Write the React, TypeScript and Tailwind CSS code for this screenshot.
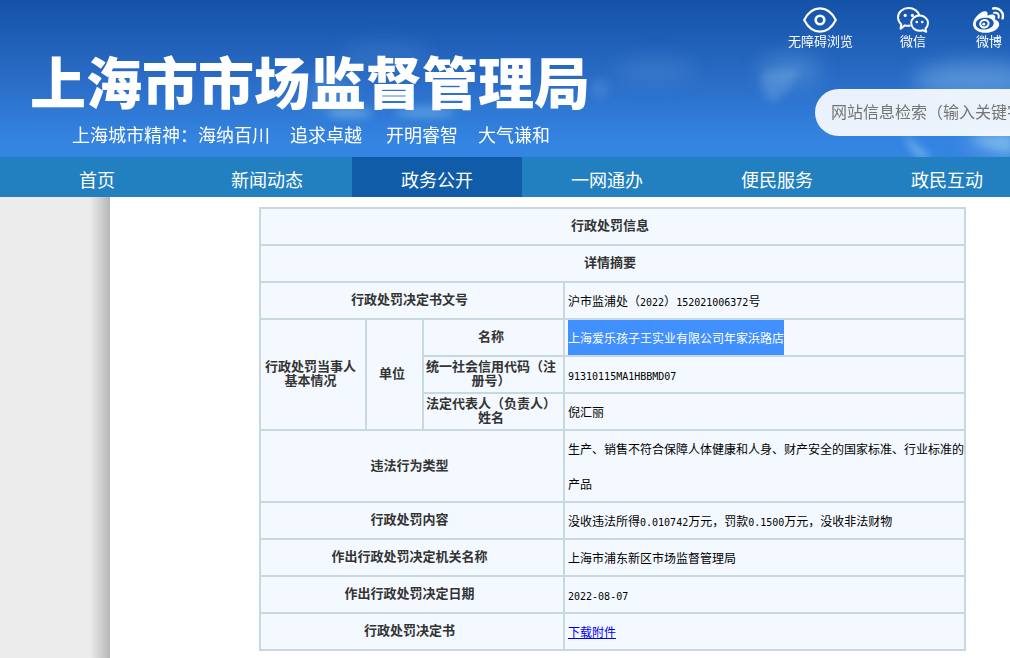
import type { ReactNode } from 'react';

interface NavItem {
  label: string;
  active?: boolean;
}

const NAV_ITEMS: NavItem[] = [
  { label: '首页' },
  { label: '新闻动态' },
  { label: '政务公开', active: true },
  { label: '一网通办' },
  { label: '便民服务' },
  { label: '政民互动' },
];

function EyeIcon() {
  return (
    <svg className="h-[26px] w-[34px]" viewBox="0 0 34 26" fill="none" stroke="currentColor" aria-hidden="true">
      <path d="M1.2 13C5 5.5 10.5 1.4 17 1.4S29 5.5 32.8 13C29 20.5 23.5 24.6 17 24.6S5 20.5 1.2 13Z" strokeWidth="2.2" />
      <circle cx="17" cy="13" r="4.3" strokeWidth="2.6" />
    </svg>
  );
}

function WechatIcon() {
  return (
    <svg className="h-[26px] w-[32px]" viewBox="0 0 32 26" fill="none" stroke="currentColor" aria-hidden="true">
      <path
        d="M13.6 18.6C11.4 19 9.4 18.9 7.8 18.4L3.6 21.8L4.2 17.2C2.1 15.4 1 13 1 10.3C1 5 5.8 1 11.6 1C17 1 21.2 4.2 22.2 8.3"
        strokeWidth="2"
        strokeLinejoin="round"
      />
      <path
        d="M22.6 8.6C27.3 8.6 31 11.9 31 16.1C31 18.4 30 20.3 28.4 21.6L29.2 24.8L25.6 23.2C24.7 23.5 23.7 23.8 22.6 23.8C17.9 23.8 14.2 20.4 14.2 16.1S17.9 8.6 22.6 8.6Z"
        strokeWidth="2"
        strokeLinejoin="round"
      />
      <g fill="currentColor" stroke="none">
        <circle cx="8.2" cy="8.4" r="1.6" />
        <circle cx="15.4" cy="8.4" r="1.6" />
        <circle cx="19.8" cy="15" r="1.3" />
        <circle cx="25.2" cy="15" r="1.3" />
      </g>
    </svg>
  );
}

function WeiboIcon() {
  return (
    <svg className="h-[26px] w-[32px]" viewBox="0 0 32 26" fill="none" stroke="currentColor" aria-hidden="true">
      <path
        fill="currentColor"
        fillRule="evenodd"
        stroke="none"
        d="M0 17.2C0 11.6 7 4.2 12 4.2C14.4 4.2 15.2 6.2 14.4 8.8C17.4 7.4 21 7 22 9C22.5 10 22.3 11.2 21.9 12.4C24.4 13.1 26.2 14.8 26.2 17.2C26.2 21.6 20.2 25.8 12.6 25.8C5.6 25.8 0 22.4 0 17.2ZM2.8 17.2C3.1 20.8 7.2 22.9 12.2 22.4C17.2 21.9 21 19.1 20.7 15.7C20.4 12.4 16.2 10.3 11.3 10.8C6.4 11.3 2.6 13.8 2.8 17.2Z"
      />
      <ellipse cx="11.4" cy="16.7" rx="4.2" ry="3.7" strokeWidth="2" transform="rotate(-15 11.4 16.7)" />
      <circle cx="10.8" cy="17.2" r="1.4" fill="currentColor" stroke="none" />
      <path d="M20.2 1.5C26.2 .2 31.2 5 29.6 11.4" strokeWidth="2.4" strokeLinecap="round" />
      <path d="M21 5.8C24.3 5.2 26.6 7.4 25.6 10.6" strokeWidth="2" strokeLinecap="round" />
    </svg>
  );
}

function Clouds() {
  return (
    <svg
      className="absolute inset-0 h-full w-full"
      viewBox="0 0 1010 157"
      preserveAspectRatio="xMaxYMid slice"
      aria-hidden="true"
    >
      <defs>
        <filter id="soft" x="-60%" y="-100%" width="220%" height="300%">
          <feGaussianBlur stdDeviation="10" />
        </filter>
        <filter id="wisp" x="-60%" y="-60%" width="220%" height="220%">
          <feGaussianBlur stdDeviation="4" />
        </filter>
      </defs>
      <g fill="#8fc4ee" filter="url(#soft)">
        <ellipse cx="385" cy="55" rx="45" ry="14" opacity="0.12" />
        <ellipse cx="330" cy="92" rx="18" ry="16" opacity="0.3" />
        <ellipse cx="655" cy="70" rx="40" ry="12" opacity="0.16" />
        <ellipse cx="790" cy="70" rx="32" ry="16" opacity="0.26" />
        <ellipse cx="975" cy="80" rx="62" ry="18" opacity="0.42" />
        <ellipse cx="1000" cy="142" rx="34" ry="14" opacity="0.4" />
      </g>
      <g fill="#9fd0f2" filter="url(#wisp)">
        <ellipse cx="350" cy="113" rx="22" ry="5" opacity="0.45" />
        <ellipse cx="425" cy="112" rx="30" ry="6" opacity="0.35" />
        <ellipse cx="600" cy="88" rx="9" ry="10" opacity="0.16" />
        <path d="M762 72L800 68Q782 104 770 102Q760 96 762 72Z" opacity="0.22" />
        <path d="M905 132Q916 150 932 157L922 159Q908 150 905 132Z" opacity="0.7" />
        <path d="M970 138Q990 150 1012 154L1012 134Z" opacity="0.45" />
      </g>
    </svg>
  );
}

function QuickLink({ icon, label }: { icon: ReactNode; label: string }) {
  return (
    <a href="#" className="flex flex-col items-center whitespace-nowrap text-[13px] leading-4 text-white">
      {icon}
      <span>{label}</span>
    </a>
  );
}

// half-width runs are set in a monospace face so they take half a glyph each
function Mixed({ text }: { text: string }) {
  return (
    <>
      {text.split(/([0-9A-Z.-]+)/).map((part, i) =>
        i % 2 === 1 ? (
          <span key={i} className="font-['DejaVu_Sans_Mono',monospace] text-[10px] leading-none">
            {part}
          </span>
        ) : (
          part
        )
      )}
    </>
  );
}

function Label({ children, colSpan, rowSpan }: { children: ReactNode; colSpan?: number; rowSpan?: number }) {
  return (
    <th
      colSpan={colSpan}
      rowSpan={rowSpan}
      className="h-[37px] border-2 border-[#c8d8e0] pr-1.5 pb-[3px] pl-px text-center align-middle text-[13px] leading-[14px] font-bold text-[#333]"
    >
      {children}
    </th>
  );
}

function Value({ children }: { children: ReactNode }) {
  return (
    <td className="border-2 border-[#c8d8e0] pl-[3px] text-left align-middle text-xs leading-[35px] text-black">
      {children}
    </td>
  );
}

export default function App() {
  return (
    <div className="flex min-h-screen flex-col overflow-x-hidden bg-white font-['Noto_Sans_CJK_SC',sans-serif]">
      <header className="relative overflow-hidden bg-linear-to-b from-[#1452a8] via-[#2a6cc6] to-[#3484e2] to-90%">
        <Clouds />
        <div className="relative flex h-[157px] justify-between">
          <div className="flex shrink-0 flex-col pt-[46px] pl-[30px] text-white">
            <h1 className="text-[56px] leading-[68px] font-black whitespace-nowrap">上海市市场监督管理局</h1>
            <p className="flex pt-2 pl-[42px] text-lg leading-6 whitespace-nowrap">
              <span>上海城市精神：海纳百川</span>
              <span className="ml-5">追求卓越</span>
              <span className="ml-6">开明睿智</span>
              <span className="ml-5">大气谦和</span>
            </p>
          </div>
          <div className="flex shrink-0 flex-col items-end gap-10 pt-[7px]">
            <div className="flex gap-11 pr-[5px]">
              <QuickLink icon={<EyeIcon />} label="无障碍浏览" />
              <QuickLink icon={<WechatIcon />} label="微信" />
              <QuickLink icon={<WeiboIcon />} label="微博" />
            </div>
            <input
              type="text"
              aria-label="网站信息检索"
              placeholder="网站信息检索（输入关键字）"
              className="h-[47px] w-[195px] rounded-l-[24px] bg-white/90 pb-1 pl-4 text-base text-black outline-none placeholder:text-[#757575]"
            />
          </div>
        </div>
      </header>

      <nav className="flex h-10 shrink-0 overflow-hidden bg-[#2280c0] pl-3">
        {NAV_ITEMS.map((item) => (
          <a
            key={item.label}
            href="#"
            className={`w-[170px] shrink-0 text-center text-lg leading-[44px] text-white ${
              item.active ? 'bg-[#115ca8]' : ''
            }`}
          >
            {item.label}
          </a>
        ))}
      </nav>

      <div className="flex flex-1">
        <aside className="flex w-[110px] shrink-0 justify-end bg-[#ececec]">
          <div className="w-5 bg-linear-to-r from-[#ececec] to-[#b6b6b6]" />
        </aside>
        <main className="flex-1 pt-2.5 pr-11 pb-1.5 pl-[149px]">
          <table className="w-full table-fixed border-collapse bg-[#f4f9ff]">
            <colgroup>
              <col className="w-[106px]" />
              <col className="w-[57px]" />
              <col className="w-[141px]" />
              <col />
            </colgroup>
            <tbody>
              <tr>
                <Label colSpan={4}>行政处罚信息</Label>
              </tr>
              <tr>
                <Label colSpan={4}>详情摘要</Label>
              </tr>
              <tr>
                <Label colSpan={3}>行政处罚决定书文号</Label>
                <Value>
                  <Mixed text="沪市监浦处（2022）152021006372号" />
                </Value>
              </tr>
              <tr>
                <Label rowSpan={3}>行政处罚当事人基本情况</Label>
                <Label rowSpan={3}>单位</Label>
                <Label>名称</Label>
                <Value>
                  <span className="block w-fit bg-[#4090ff] text-white">上海爱乐孩子王实业有限公司年家浜路店</span>
                </Value>
              </tr>
              <tr>
                <Label>统一社会信用代码（注册号）</Label>
                <Value>
                  <Mixed text="91310115MA1HBBMD07" />
                </Value>
              </tr>
              <tr>
                <Label>法定代表人（负责人）姓名</Label>
                <Value>倪汇丽</Value>
              </tr>
              <tr>
                <Label colSpan={3}>违法行为类型</Label>
                <Value>生产、销售不符合保障人体健康和人身、财产安全的国家标准、行业标准的产品</Value>
              </tr>
              <tr>
                <Label colSpan={3}>行政处罚内容</Label>
                <Value>
                  <Mixed text="没收违法所得0.010742万元，罚款0.1500万元，没收非法财物" />
                </Value>
              </tr>
              <tr>
                <Label colSpan={3}>作出行政处罚决定机关名称</Label>
                <Value>上海市浦东新区市场监督管理局</Value>
              </tr>
              <tr>
                <Label colSpan={3}>作出行政处罚决定日期</Label>
                <Value>
                  <Mixed text="2022-08-07" />
                </Value>
              </tr>
              <tr>
                <Label colSpan={3}>行政处罚决定书</Label>
                <Value>
                  <a href="#" className="text-[#0000ee] underline">
                    下载附件
                  </a>
                </Value>
              </tr>
            </tbody>
          </table>
        </main>
      </div>
    </div>
  );
}
